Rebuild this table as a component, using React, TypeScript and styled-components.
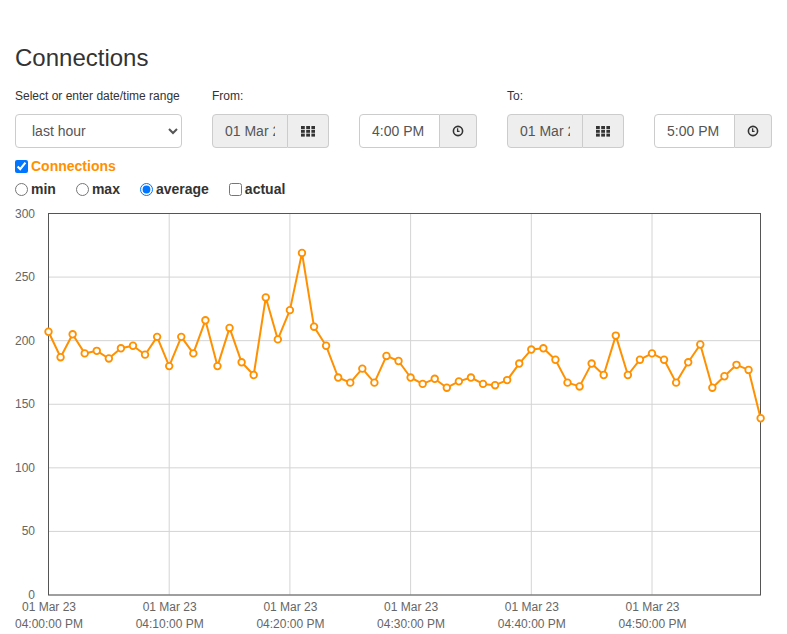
import React from "react";
import styled, { createGlobalStyle } from "styled-components";

const GlobalStyle = createGlobalStyle`
  html, body { margin: 0; padding: 0; background: #fff; }
  body {
    font-family: "Liberation Sans", Arial, Helvetica, sans-serif;
    font-size: 14px;
    color: #333;
  }
  * { box-sizing: border-box; }
`;

const ORANGE = "#ff9000";

const Page = styled.div`
  width: 787px;
  padding: 0 15px;
`;

const Title = styled.h3`
  margin: 45px 0 0;
  font-size: 24px;
  font-weight: 500;
  line-height: 26px;
  color: #333;
`;

const FormRow = styled.div`
  display: flex;
  gap: 30px;
  margin-top: 17px;
`;

const Field = styled.div<{ $w?: number }>`
  display: flex;
  flex-direction: column;
  width: ${(p) => (p.$w ? `${p.$w}px` : "auto")};
`;

const Label = styled.label`
  display: block;
  font-size: 12px;
  line-height: 17px;
  height: 17px;
  margin-bottom: 9px;
  color: #333;
  white-space: nowrap;
`;

const Select = styled.select`
  width: 167px;
  height: 34px;
  padding: 6px 8px;
  font-family: "Liberation Sans", Arial, sans-serif;
  font-size: 14px;
  color: #555;
  background: #fff;
  border: 1px solid #ccc;
  border-radius: 4px;
  text-indent: 4px;
`;

const Pair = styled.div`
  display: flex;
  gap: 30px;
`;

const InputGroup = styled.div`
  display: flex;
  height: 34px;
`;

const TextInput = styled.input<{ $w: number; $grey?: boolean }>`
  width: ${(p) => p.$w}px;
  height: 34px;
  padding: 6px 12px;
  font-family: "Liberation Sans", Arial, sans-serif;
  font-size: 14px;
  color: #555;
  background: ${(p) => (p.$grey ? "#eee" : "#fff")};
  border: 1px solid #ccc;
  border-radius: 4px 0 0 4px;
  outline: none;
`;

const Addon = styled.span<{ $w: number }>`
  display: flex;
  align-items: center;
  justify-content: center;
  width: ${(p) => p.$w}px;
  height: 34px;
  background: #eee;
  border: 1px solid #ccc;
  border-left: 0;
  border-radius: 0 4px 4px 0;
  color: #333;
`;

const CheckRow = styled.div`
  display: flex;
  align-items: center;
  height: 20px;
  margin-top: 8px;
`;

const RadioRow = styled.div`
  display: flex;
  align-items: center;
  gap: 20px;
  height: 20px;
  margin-top: 3px;
`;

const Option = styled.label<{ $color?: string }>`
  display: inline-flex;
  align-items: center;
  font-weight: bold;
  font-size: 14px;
  color: ${(p) => p.$color || "#333"};
  input {
    width: 13px;
    height: 13px;
    margin: 0 3px 0 0;
  }
`;

const ChartSvg = styled.svg`
  display: block;
  margin: 6px 0 0 -15px;
  font-family: "Liberation Sans", Arial, sans-serif;
`;

const GridIcon = () => (
  <svg width="14" height="11" viewBox="0 0 14 11">
    {[0, 1, 2].map((r) =>
      [0, 1, 2].map((c) => (
        <rect key={`${r}-${c}`} x={c * 5.2} y={r * 3.8} width="3.8" height="3" fill="#333" />
      ))
    )}
  </svg>
);

const ClockIcon = () => (
  <svg width="12" height="12" viewBox="0 0 12 12">
    <circle cx="6" cy="6" r="4.6" fill="none" stroke="#333" strokeWidth="1.6" />
    <path d="M5.6 3.2 V6.4 H7.6" fill="none" stroke="#333" strokeWidth="1.3" />
  </svg>
);

const DATA = [
  207, 187, 205, 190, 192, 186, 194, 196, 189, 203,
  180, 203, 190, 216, 180, 210, 183, 173, 234, 201,
  224, 269, 211, 196, 171, 167, 178, 167, 188, 184,
  171, 166, 170, 163, 168, 171, 166, 165, 169, 182,
  193, 194, 185, 167, 164, 182, 173, 204, 173, 185,
  190, 185, 167, 183, 197, 163, 172, 181, 177, 139,
];

const W = 787;
const H = 429;
const PL = 48.5;
const PR = 760.5;
const PT = 8.5;
const PB = 390;
const STEP = 12.07;
const xAt = (i: number) => PL + i * STEP;
const yAt = (v: number) => PB - (v * (PB - PT)) / 300;

const Chart = () => {
  const yTicks = [0, 50, 100, 150, 200, 250, 300];
  const xTicks = [0, 10, 20, 30, 40, 50];
  const pts = DATA.map((v, i) => `${xAt(i).toFixed(1)},${yAt(v).toFixed(1)}`).join(" ");
  return (
    <ChartSvg width={W} height={H} viewBox={`0 0 ${W} ${H}`}>
      {yTicks.map((t) => (
        <g key={`y${t}`}>
          <line x1={PL} x2={PR} y1={yAt(t)} y2={yAt(t)} stroke="#d4d4d4" strokeWidth="1" />
          <text x={35} y={yAt(t) + 4} textAnchor="end" fontSize="12" fill="#666">
            {t}
          </text>
        </g>
      ))}
      {xTicks.map((m) => (
        <g key={`x${m}`}>
          <line x1={xAt(m)} x2={xAt(m)} y1={PT} y2={PB} stroke="#d4d4d4" strokeWidth="1" />
          <text x={xAt(m) + 0.5} y={405.5} textAnchor="middle" fontSize="12" fill="#666">
            01 Mar 23
          </text>
          <text x={xAt(m) + 0.5} y={423} textAnchor="middle" fontSize="12" fill="#666">
            {`04:${String(m).padStart(2, "0")}:00 PM`}
          </text>
        </g>
      ))}
      <rect x={PL} y={PT} width={PR - PL} height={PB - PT} fill="none" stroke="#555" strokeWidth="1" />
      <polyline points={pts} fill="none" stroke={ORANGE} strokeWidth="2" strokeLinejoin="round" />
      {DATA.map((v, i) => (
        <circle key={i} cx={xAt(i)} cy={yAt(v)} r="3.3" fill="#fff" stroke={ORANGE} strokeWidth="1.8" />
      ))}
    </ChartSvg>
  );
};

const DateTimePair = ({ time }: { time: string }) => (
  <Pair>
    <InputGroup>
      <TextInput $w={76} $grey readOnly defaultValue="01 Mar 2023" />
      <Addon $w={41}>
        <GridIcon />
      </Addon>
    </InputGroup>
    <InputGroup>
      <TextInput $w={81} readOnly defaultValue={time} />
      <Addon $w={37}>
        <ClockIcon />
      </Addon>
    </InputGroup>
  </Pair>
);

export default function App() {
  return (
    <>
      <GlobalStyle />
      <Page>
        <Title>Connections</Title>
        <FormRow>
          <Field $w={167}>
            <Label>Select or enter date/time range</Label>
            <Select defaultValue="last hour">
              <option>last hour</option>
              <option>last day</option>
              <option>last week</option>
            </Select>
          </Field>
          <Field>
            <Label>From:</Label>
            <DateTimePair time="4:00 PM" />
          </Field>
          <Field>
            <Label>To:</Label>
            <DateTimePair time="5:00 PM" />
          </Field>
        </FormRow>
        <CheckRow>
          <Option $color={ORANGE}>
            <input type="checkbox" defaultChecked />
            Connections
          </Option>
        </CheckRow>
        <RadioRow>
          <Option>
            <input type="radio" name="agg" />
            min
          </Option>
          <Option>
            <input type="radio" name="agg" />
            max
          </Option>
          <Option>
            <input type="radio" name="agg" defaultChecked />
            average
          </Option>
          <Option>
            <input type="checkbox" />
            actual
          </Option>
        </RadioRow>
        <Chart />
      </Page>
    </>
  );
}
